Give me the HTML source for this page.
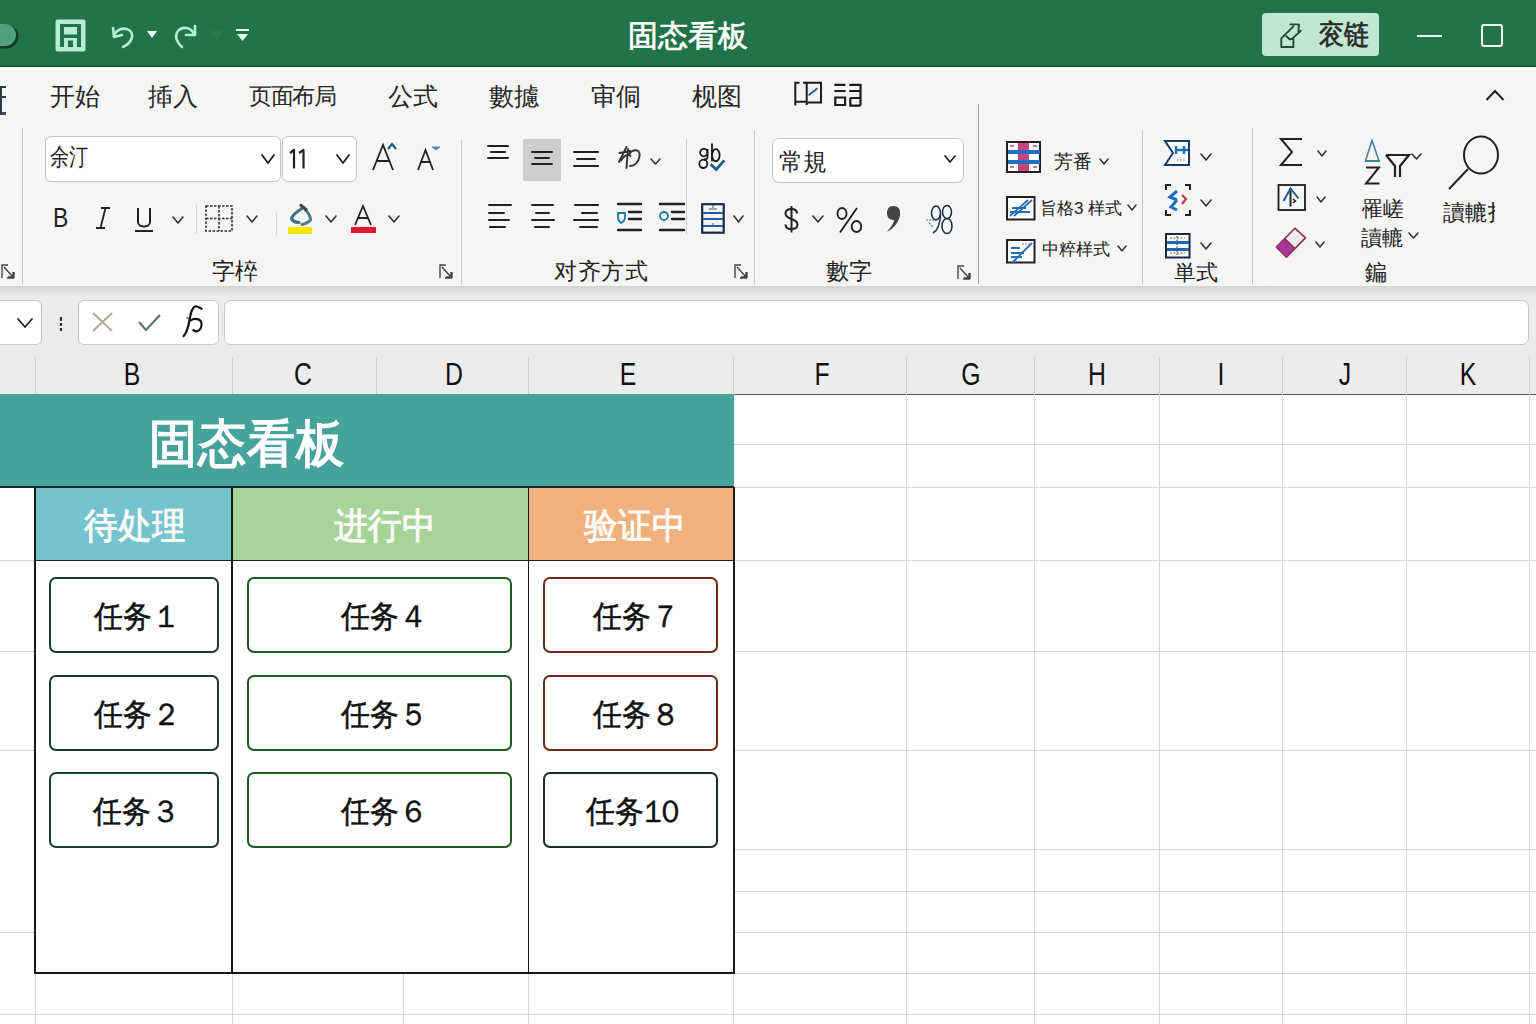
<!DOCTYPE html>
<html><head><meta charset="utf-8">
<style>
*{margin:0;padding:0;box-sizing:border-box}
html,body{width:1536px;height:1024px;overflow:hidden}
body{position:relative;background:#fff;font-family:"Liberation Sans",sans-serif;color:#222}
.a{position:absolute}
.t{position:absolute;white-space:nowrap;line-height:1}
svg{position:absolute;overflow:visible}
.vl{position:absolute;width:1px;background:#d6d6d6}
.hl{position:absolute;height:1px;background:#d6d6d6}
.sep{position:absolute;width:1px;background:#c9c9c9}
.chev{position:absolute}
.card{position:absolute;background:#fff;border:2px solid #1d3a36;border-radius:7px;font-size:32px;color:#111;text-align:center}
.ct{position:absolute;white-space:nowrap;line-height:1;font-size:31px;color:#111;-webkit-text-stroke:0.5px #111;transform:scaleX(.93);transform-origin:left}
.colh{position:absolute;font-size:27px;color:#111;top:361px;line-height:1;transform:scaleX(.82)}
</style></head><body>

<!-- ===== TITLE BAR ===== -->
<div class="a" style="left:0;top:0;width:1536px;height:67px;background:#227348"></div>
<div class="a" style="left:0;top:65.5px;width:1536px;height:1.5px;background:#0f4a28"></div>
<!-- autosave toggle -->
<div class="a" style="left:-30px;top:24px;width:46px;height:22px;border-radius:11px;background:#52a077;box-shadow:1.5px 1.5px 0 1px #143f27"></div>
<!-- save icon -->
<svg style="left:55px;top:19px" width="31" height="33" viewBox="0 0 31 33">
 <rect x="0.5" y="0.5" width="30" height="32" rx="2" fill="#b6efcf"/>
 <rect x="5" y="5" width="21" height="23" fill="#22734a"/>
 <rect x="9" y="8" width="13" height="7.5" fill="#b6efcf"/>
 <rect x="9" y="19" width="13" height="9" fill="#b6efcf"/>
 <rect x="13" y="21.5" width="5" height="6.5" fill="#22734a"/>
</svg>
<!-- undo -->
<svg style="left:111px;top:24px" width="26" height="25" viewBox="0 0 26 25">
 <path d="M3 12 C5 5 13 3 18 6 C24 10 21 19 12 23" fill="none" stroke="#b6efcf" stroke-width="2.6" stroke-linecap="round"/>
 <path d="M2 4 L3 13 L11 11" fill="none" stroke="#b6efcf" stroke-width="2.6" stroke-linecap="round" stroke-linejoin="round"/>
</svg>
<svg style="left:147px;top:31px" width="10" height="7"><path d="M0 0 L10 0 L5 7 Z" fill="#e8fff2"/></svg>
<!-- redo -->
<svg style="left:174px;top:24px" width="24" height="24" viewBox="0 0 24 24">
 <path d="M20 10 C17 3 8 2 4 7 C0 12 3 19 8 23" fill="none" stroke="#b6efcf" stroke-width="2.6" stroke-linecap="round"/>
 <path d="M21 2 L21 11 L12 11" fill="none" stroke="#b6efcf" stroke-width="2.6" stroke-linecap="round" stroke-linejoin="round"/>
</svg>
<svg style="left:210px;top:31px" width="13" height="9"><path d="M0 0 L13 0 L6.5 9 Z" fill="#2a7950"/></svg>
<svg style="left:236px;top:29px" width="13" height="13"><rect x="0" y="0" width="13" height="2" fill="#e8fff2"/><path d="M1 5 L12 5 L6.5 12 Z" fill="#e8fff2"/></svg>
<!-- title -->
<div class="t" style="left:628px;top:21px;font-size:30px;color:#fff;-webkit-text-stroke:0.7px #fff">固态看板</div>
<!-- share button -->
<div class="a" style="left:1262px;top:13px;width:117px;height:43px;border-radius:4px;background:#bfe9d0"></div>
<svg style="left:1279px;top:23px" width="24" height="26" viewBox="0 0 24 26">
 <path d="M2.3 15.4 L2.3 24 L14.4 24 L14.4 15.6 M2.3 15.4 L14.4 3.3 M11.3 1.4 L19.9 1.4 L19.4 8.4 M21.9 7.8 L13.2 15.6 M7.4 13.1 L10.6 16.2 L14.4 15.8" fill="none" stroke="#234a37" stroke-width="1.9" stroke-linejoin="round" stroke-linecap="round"/>
</svg>
<div class="t" style="left:1319px;top:20px;font-size:25px;color:#2a2a2a;-webkit-text-stroke:0.6px #2a2a2a;transform:scaleY(1.12);transform-origin:top">衮链</div>
<div class="a" style="left:1417px;top:35px;width:25px;height:2px;background:#e6f5ec"></div>
<div class="a" style="left:1481px;top:24px;width:22px;height:23px;border:2px solid #eafaf0;border-radius:3px"></div>

<!-- ===== RIBBON ===== -->
<div class="a" style="left:0;top:67px;width:1536px;height:220px;background:#f5f5f4"></div>
<div class="a" style="left:0;top:67px;width:1536px;height:2px;background:#fbfbfb"></div>
<div class="a" style="left:0;top:287px;width:1536px;height:65px;background:#ececec"></div>
<div class="a" style="left:0;top:286px;width:1536px;height:10px;background:linear-gradient(#d4d4d4,#ececec)"></div>


<!-- tabs -->
<div class="a" style="left:0;top:84px;width:7px;height:32px;overflow:hidden">
 <div class="a" style="left:-3px;top:1.5px;width:9px;height:2.5px;background:#2e3a48"></div>
 <div class="a" style="left:-3px;top:11.5px;width:9px;height:2.5px;background:#2e3a48"></div>
 <div class="a" style="left:-3px;top:27.5px;width:9px;height:3px;background:#3a4a5c"></div>
 <div class="a" style="left:0;top:1.5px;width:1.5px;height:29px;background:#2e3a48"></div>
</div>
<div class="t" style="left:50px;top:84px;font-size:25px;color:#262626">开始</div>
<div class="t" style="left:148px;top:84px;font-size:25px;color:#262626">揷入</div>
<div class="t" style="left:249px;top:85px;font-size:23px;color:#262626;letter-spacing:-1.5px">页面布局</div>
<div class="t" style="left:388px;top:84px;font-size:25px;color:#262626">公式</div>
<div class="t" style="left:489px;top:84px;font-size:25px;color:#262626">數攄</div>
<div class="t" style="left:591px;top:84px;font-size:25px;color:#262626">审侗</div>
<div class="t" style="left:692px;top:84px;font-size:25px;color:#262626">枧图</div>
<svg style="left:790px;top:80px" width="76" height="30" viewBox="0 0 76 30">
 <path d="M4.3 2.8 L9.5 2.8 M13 2.8 L31 2.8 L31 23.5 M5.3 2.8 L5.3 25.5 M16.7 2.8 L16.7 25 M5.6 21.7 L16.7 21.7 M16.7 22.5 L30.7 22.5" fill="none" stroke="#1c1c1c" stroke-width="2"/>
 <path d="M18.6 15.2 L27.4 8.3" stroke="#1f5fa8" stroke-width="2"/>
 <path d="M44.4 4.8 L55.4 4.8 M59.3 4.8 L70.5 4.8 L70.5 25.6 M44.4 11 L55.6 11 M59.3 11 L70 11 M45.3 17.5 L55.1 17.5 L55.1 25 L45.3 25 Z M60.3 18 L70.5 18 M60.3 18 L60.3 25.6 L70.5 25.6" fill="none" stroke="#1c1c1c" stroke-width="2.2"/>
</svg>
<svg style="left:1485px;top:89px" width="20" height="12" viewBox="0 0 20 12"><path d="M1.5 11 L10 2 L18.5 11" fill="none" stroke="#222" stroke-width="2"/></svg>


<!-- ===== FONT GROUP ===== -->
<div class="sep" style="left:22px;top:128px;height:156px"></div>
<svg style="left:1px;top:264px" width="14" height="15" viewBox="0 0 14 15"><path d="M1 14 L1 1 L7 1 M13 14 L13 8 M13 14 L6 14 M3 3 L12 13 M12 13 L12 8 M12 13 L7 13" fill="none" stroke="#444" stroke-width="1.4"/></svg>
<div class="a" style="left:45px;top:136px;width:236px;height:46px;background:#fff;border:1px solid #c2c2c2;border-radius:6px"></div>
<div class="t" style="left:50px;top:145px;font-size:24px;color:#222;transform:scaleX(.8);transform-origin:left">余汀</div>
<svg style="left:261px;top:154px" width="14" height="10" viewBox="0 0 14 10"><path d="M1 1 L7.0 9 L13 1" fill="none" stroke="#222" stroke-width="1.8" stroke-linecap="round" stroke-linejoin="round"/></svg>
<div class="a" style="left:282px;top:136px;width:75px;height:46px;background:#fff;border:1px solid #c2c2c2;border-radius:6px"></div>
<svg style="left:289px;top:149px" width="20" height="20" viewBox="0 0 20 20"><path d="M1 4 L5 1 L5 19.5 M10 4 L14.5 1 L14.5 19.5" fill="none" stroke="#222" stroke-width="2.2" stroke-linejoin="round"/></svg>
<svg style="left:336px;top:154px" width="14" height="10" viewBox="0 0 14 10"><path d="M1 1 L7.0 9 L13 1" fill="none" stroke="#222" stroke-width="1.8" stroke-linecap="round" stroke-linejoin="round"/></svg>
<svg style="left:372px;top:142px" width="26" height="30" viewBox="0 0 26 30">
 <path d="M1 28 L11 3 L21 28 M5 19 L17 19" fill="none" stroke="#222" stroke-width="1.8"/>
 <path d="M16 7 L20 2 L24 7" fill="none" stroke="#1e5d8a" stroke-width="2.2"/>
</svg>
<svg style="left:417px;top:145px" width="26" height="27" viewBox="0 0 26 27">
 <path d="M1 25 L8.5 5 L16 25 M4 17 L13 17" fill="none" stroke="#222" stroke-width="1.8"/>
 <path d="M15 2 L19 5 L23 2 Z" fill="#4f8fba" stroke="#4f8fba" stroke-width="1"/>
</svg>
<div class="sep" style="left:461px;top:140px;height:144px"></div>
<div class="t" style="left:53px;top:205px;font-size:27px;color:#222;transform:scaleX(.85);transform-origin:left">B</div>
<svg style="left:95px;top:207px" width="16" height="22" viewBox="0 0 16 22">
 <path d="M6 1 L15 1 M1 21 L10 21 M10.5 1 L5.5 21" fill="none" stroke="#222" stroke-width="1.8"/>
</svg>
<svg style="left:134px;top:207px" width="20" height="26" viewBox="0 0 20 26">
 <path d="M4 1 L4 15 C4 21 16 21 16 15 L16 1" fill="none" stroke="#222" stroke-width="2"/>
 <path d="M1 24 L19 24" stroke="#222" stroke-width="2"/>
</svg>
<svg style="left:172px;top:216px" width="12" height="8" viewBox="0 0 12 8"><path d="M1 1 L6.0 7 L11 1" fill="none" stroke="#333" stroke-width="1.6" stroke-linecap="round" stroke-linejoin="round"/></svg>
<div class="sep" style="left:196px;top:204px;height:30px;background:#d6d6d6"></div>
<svg style="left:205px;top:205px" width="28" height="27" viewBox="0 0 28 27">
 <path d="M1 1 L27 1 L27 26 L1 26 Z M14 1 L14 26 M1 13.5 L27 13.5" fill="none" stroke="#333" stroke-width="1.6" stroke-dasharray="2.5 1.5"/>
</svg>
<svg style="left:246px;top:215px" width="12" height="8" viewBox="0 0 12 8"><path d="M1 1 L6.0 7 L11 1" fill="none" stroke="#333" stroke-width="1.6" stroke-linecap="round" stroke-linejoin="round"/></svg>
<div class="sep" style="left:276px;top:212px;height:24px;background:#d6d6d6"></div>
<svg style="left:288px;top:203px" width="26" height="31" viewBox="0 0 26 31">
 <path d="M14 5.5 Q5 11 3.5 15.5 Q5 19 11 19.5" fill="none" stroke="#3f7083" stroke-width="3.2" stroke-linecap="round"/>
 <path d="M17.5 7 Q23 13 22.5 17 Q20 20 14 21.5" fill="none" stroke="#4a7d8e" stroke-width="3" stroke-linecap="round"/>
 <path d="M13 2.5 L18 6.5" stroke="#3d4a4e" stroke-width="3.2" stroke-linecap="round"/>
 <rect x="0" y="24" width="24" height="7" fill="#f7e600"/>
</svg>
<svg style="left:325px;top:215px" width="12" height="8" viewBox="0 0 12 8"><path d="M1 1 L6.0 7 L11 1" fill="none" stroke="#333" stroke-width="1.6" stroke-linecap="round" stroke-linejoin="round"/></svg>
<svg style="left:351px;top:204px" width="26" height="30" viewBox="0 0 26 30">
 <path d="M4 21 L12 2 L20 21 M7 14 L17 14" fill="none" stroke="#222" stroke-width="1.8"/>
 <rect x="0" y="23" width="25" height="6" fill="#dd1a2b"/>
</svg>
<svg style="left:388px;top:215px" width="12" height="8" viewBox="0 0 12 8"><path d="M1 1 L6.0 7 L11 1" fill="none" stroke="#333" stroke-width="1.6" stroke-linecap="round" stroke-linejoin="round"/></svg>
<div class="t" style="left:212px;top:260px;font-size:23px;color:#222">字椊</div>
<svg style="left:439px;top:264px" width="14" height="15" viewBox="0 0 14 15"><path d="M1 14 L1 1 L7 1 M13 14 L13 8 M13 14 L6 14 M3 3 L12 13 M12 13 L12 8 M12 13 L7 13" fill="none" stroke="#444" stroke-width="1.4"/></svg>


<!-- ===== ALIGN GROUP ===== -->
<svg style="left:486px;top:144px" width="50" height="40"><path d="M2 2 L22 2 M5 8 L19 8 M2 14 L22 14" stroke="#222" stroke-width="2" stroke-linecap="round"/></svg>
<div class="a" style="left:523px;top:139px;width:38px;height:42px;background:#cdcdcd"></div>
<svg style="left:530px;top:150px" width="50" height="40"><path d="M2 2 L22 2 M5 8 L19 8 M2 14 L22 14" stroke="#222" stroke-width="2" stroke-linecap="round"/></svg>
<svg style="left:572px;top:150px" width="50" height="40"><path d="M2 2 L26 2 M5 9 L23 9 M2 16 L26 16" stroke="#222" stroke-width="2" stroke-linecap="round"/></svg>
<svg style="left:616px;top:145px" width="26" height="26" viewBox="0 0 26 26">
 <path d="M10.5 2 L3 17 M3.5 8 L14 6 M5 15.5 C8 10 13 8.5 14.5 11 M12 4 L10.5 23 M12.5 10 C17 3 25 4 23.5 11.5 C22 18 18 21 14 21" fill="none" stroke="#333" stroke-width="1.9" stroke-linecap="round"/>
</svg>
<svg style="left:650px;top:158px" width="11" height="7" viewBox="0 0 11 7"><path d="M1 1 L5.5 6 L10 1" fill="none" stroke="#333" stroke-width="1.5" stroke-linecap="round" stroke-linejoin="round"/></svg>
<div class="sep" style="left:686px;top:139px;height:95px;background:#cdcdcd"></div>
<svg style="left:698px;top:142px" width="30" height="30" viewBox="0 0 30 30">
 <circle cx="5.8" cy="10.6" r="3.7" fill="none" stroke="#1a1a1a" stroke-width="1.8"/>
 <path d="M9.5 7 L9.5 15 C9.5 17 8 17.5 6 17.5" fill="none" stroke="#1a1a1a" stroke-width="1.8"/>
 <ellipse cx="5.3" cy="21.8" rx="4" ry="4.2" fill="none" stroke="#1a1a1a" stroke-width="1.8"/>
 <path d="M14 1.5 L14 19.3" stroke="#1a1a1a" stroke-width="1.8"/>
 <ellipse cx="17.8" cy="13.2" rx="3.8" ry="6" fill="none" stroke="#1a1a1a" stroke-width="1.8"/>
 <path d="M12.7 22.2 L18.2 27.5 L26.3 18.4" fill="none" stroke="#1d5f8a" stroke-width="2.8"/>
</svg>
<svg style="left:487px;top:203px" width="50" height="40"><path d="M2 2 L24 2 M2 10 L17 10 M2 17 L22 17 M3 24 L18 24" stroke="#222" stroke-width="2" stroke-linecap="round"/></svg>
<svg style="left:530px;top:203px" width="50" height="40"><path d="M2 2 L23 2 M6 10 L19 10 M2 17 L24 17 M5 24 L19 24" stroke="#222" stroke-width="2" stroke-linecap="round"/></svg>
<svg style="left:572px;top:203px" width="50" height="40"><path d="M3 2 L26 2 M10 10 L25 10 M2 17 L26 17 M8 24 L25 24" stroke="#222" stroke-width="2" stroke-linecap="round"/></svg>
<svg style="left:616px;top:202px" width="28" height="32" viewBox="0 0 28 32">
 <path d="M2 2 L25 2 M13 10 L25 10 M13 17 L25 17 M2 28 L25 28" stroke="#222" stroke-width="2.4" stroke-linecap="round"/>
 <path d="M2 11 L9 11 L9 15 C9 19 5 21 5 21 C5 21 2 19 2 15 Z" fill="none" stroke="#1f78a8" stroke-width="1.8"/>
</svg>
<svg style="left:658px;top:202px" width="28" height="32" viewBox="0 0 28 32">
 <path d="M2 2 L26 2 M14 10 L26 10 M14 17 L26 17 M2 28 L26 28" stroke="#222" stroke-width="2.4" stroke-linecap="round"/>
 <circle cx="6" cy="14" r="4" fill="none" stroke="#1f78a8" stroke-width="1.8"/>
</svg>
<svg style="left:701px;top:203px" width="25" height="32" viewBox="0 0 25 32">
 <rect x="1.2" y="1.2" width="21.5" height="28.5" fill="none" stroke="#1b2a44" stroke-width="2.2"/>
 <path d="M2 10 L22 10 M2 16 L22 16 M2 23 L22 23" stroke="#1e5fa3" stroke-width="1.8"/>
 <path d="M8 6 L16 6 M12 2 L12 5 M12 20 L12 23" stroke="#555" stroke-width="1"/>
</svg>
<svg style="left:733px;top:215px" width="11" height="8" viewBox="0 0 11 8"><path d="M1 1 L5.5 7 L10 1" fill="none" stroke="#333" stroke-width="1.6" stroke-linecap="round" stroke-linejoin="round"/></svg>
<div class="t" style="left:554px;top:260px;font-size:23px;color:#222;letter-spacing:0.5px">对齐方式</div>
<svg style="left:734px;top:264px" width="14" height="15" viewBox="0 0 14 15"><path d="M1 14 L1 1 L7 1 M13 14 L13 8 M13 14 L6 14 M3 3 L12 13 M12 13 L12 8 M12 13 L7 13" fill="none" stroke="#444" stroke-width="1.4"/></svg>
<div class="sep" style="left:754px;top:130px;height:154px"></div>

<!-- ===== NUMBER GROUP ===== -->
<div class="a" style="left:772px;top:138px;width:192px;height:45px;background:#fff;border:1px solid #c4c4c4;border-radius:7px"></div>
<div class="t" style="left:779px;top:150px;font-size:24px;color:#222">常規</div>
<svg style="left:944px;top:155px" width="12" height="8" viewBox="0 0 12 8"><path d="M1 1 L6.0 7 L11 1" fill="none" stroke="#222" stroke-width="1.7" stroke-linecap="round" stroke-linejoin="round"/></svg>
<svg style="left:784px;top:205px" width="15" height="28" viewBox="0 0 15 28">
 <path d="M13 8.5 C13 5 10.5 4 7.5 4 C4 4 1.5 5.5 1.5 8.5 C1.5 12 5 13 7.5 14 C10.5 15 13.5 16 13.5 19.5 C13.5 23 10.5 24 7.5 24 C4 24 1.5 23 1.5 19.5" fill="none" stroke="#222" stroke-width="2"/>
 <path d="M7.5 1 L7.5 27.5" stroke="#222" stroke-width="2"/>
</svg>
<svg style="left:812px;top:215px" width="12" height="8" viewBox="0 0 12 8"><path d="M1 1 L6.0 7 L11 1" fill="none" stroke="#333" stroke-width="1.6" stroke-linecap="round" stroke-linejoin="round"/></svg>
<svg style="left:836px;top:207px" width="27" height="26" viewBox="0 0 27 26">
 <ellipse cx="6" cy="6.5" rx="4.5" ry="5.5" fill="none" stroke="#222" stroke-width="1.9"/>
 <ellipse cx="20.5" cy="19.5" rx="4.8" ry="5.5" fill="none" stroke="#222" stroke-width="1.9"/>
 <path d="M21 1 L4 25.5" stroke="#222" stroke-width="1.9"/>
</svg>
<svg style="left:885px;top:205px" width="17" height="28" viewBox="0 0 17 28"><path d="M8 1 C13 1 16 4 15 10 C14 17 9 23 2 27 C6 22 9 18 9 15 C4 15 2 12 2 8 C2 4 4 1 8 1 Z" fill="#444"/></svg>
<svg style="left:925px;top:204px" width="28" height="31" viewBox="0 0 28 31">
 <ellipse cx="11" cy="9" rx="4.5" ry="7" fill="none" stroke="#1b2a44" stroke-width="1.5"/>
 <path d="M15.5 10 C15 20 12 27 8 29" fill="none" stroke="#1b2a44" stroke-width="1.5"/>
 <ellipse cx="22" cy="8" rx="4.5" ry="6.5" fill="none" stroke="#1b2a44" stroke-width="1.5"/>
 <ellipse cx="22" cy="22" rx="5" ry="7.5" fill="none" stroke="#1b2a44" stroke-width="1.5"/>
 <path d="M1 16 L9 16 M4 19 L8 23" stroke="#3a6e8e" stroke-width="1.2" stroke-dasharray="2 1"/>
</svg>
<div class="t" style="left:826px;top:260px;font-size:23px;color:#222">數字</div>
<svg style="left:957px;top:265px" width="14" height="15" viewBox="0 0 14 15"><path d="M1 14 L1 1 L7 1 M13 14 L13 8 M13 14 L6 14 M3 3 L12 13 M12 13 L12 8 M12 13 L7 13" fill="none" stroke="#444" stroke-width="1.4"/></svg>
<div class="sep" style="left:978px;top:104px;height:180px;background:#a8a8a8"></div>


<!-- ===== STYLES GROUP ===== -->
<svg style="left:1006px;top:141px" width="36" height="33" viewBox="0 0 36 33">
 <rect x="1" y="1" width="33" height="30" fill="#fff" stroke="#222" stroke-width="2"/>
 <rect x="12" y="2" width="11" height="28" fill="#c8447c"/>
 <path d="M2 11 L34 11 M2 21 L34 21" stroke="#1f6fc0" stroke-width="4"/>
 <path d="M4 5 L8 5 M27 5 L31 5 M4 26 L8 26 M27 26 L31 26" stroke="#d04050" stroke-width="1.5"/>
</svg>
<div class="t" style="left:1054px;top:152px;font-size:19px;color:#222">芳番</div>
<svg style="left:1099px;top:158px" width="10" height="7" viewBox="0 0 10 7"><path d="M1 1 L5.0 6 L9 1" fill="none" stroke="#333" stroke-width="1.5" stroke-linecap="round" stroke-linejoin="round"/></svg>
<svg style="left:1006px;top:196px" width="30" height="25" viewBox="0 0 30 25">
 <rect x="1" y="1" width="27.5" height="22.5" fill="#fff" stroke="#222" stroke-width="2"/>
 <path d="M4 20 L22 4 M8 20 L26 4 M6 12 L20 12 M4 16 L24 16" stroke="#1f6fc0" stroke-width="1.8"/>
</svg>
<div class="t" style="left:1040px;top:200px;font-size:17px;color:#222">旨格3 样式</div>
<svg style="left:1127px;top:204px" width="10" height="7" viewBox="0 0 10 7"><path d="M1 1 L5.0 6 L9 1" fill="none" stroke="#333" stroke-width="1.5" stroke-linecap="round" stroke-linejoin="round"/></svg>
<svg style="left:1006px;top:239px" width="30" height="25" viewBox="0 0 30 25">
 <rect x="1" y="1" width="27.5" height="22.5" fill="#fff" stroke="#222" stroke-width="2"/>
 <path d="M6 24 L26 4 M5 9 L14 9 M5 14 L18 14 M5 18 L16 18" stroke="#1f6fc0" stroke-width="1.8"/>
 <path d="M16 5 L26 5" stroke="#888" stroke-width="1" stroke-dasharray="2 1"/>
</svg>
<div class="t" style="left:1042px;top:241px;font-size:17px;color:#222">中粹样式</div>
<svg style="left:1117px;top:245px" width="10" height="7" viewBox="0 0 10 7"><path d="M1 1 L5.0 6 L9 1" fill="none" stroke="#333" stroke-width="1.5" stroke-linecap="round" stroke-linejoin="round"/></svg>
<div class="sep" style="left:1142px;top:130px;height:154px"></div>

<!-- ===== CELLS GROUP ===== -->
<svg style="left:1164px;top:140px" width="27" height="27" viewBox="0 0 27 27">
 <path d="M1 1 L25 1 L25 25 L1 25 L9 13 Z" fill="#fff" stroke="#1b3a66" stroke-width="2"/>
 <path d="M12 6 L12 14 M20 6 L20 14 M12 10 L24 10" stroke="#1f6fc0" stroke-width="2.5"/>
 <path d="M13 20 L22 20" stroke="#888" stroke-width="1" stroke-dasharray="2 1"/>
</svg>
<svg style="left:1200px;top:153px" width="12" height="8" viewBox="0 0 12 8"><path d="M1 1 L6.0 7 L11 1" fill="none" stroke="#333" stroke-width="1.6" stroke-linecap="round" stroke-linejoin="round"/></svg>
<svg style="left:1165px;top:184px" width="27" height="32" viewBox="0 0 27 32">
 <path d="M1 6 L1 1 L6 1 M20 1 L25 1 L25 6 M1 26 L1 31 L6 31 M20 31 L25 31 L25 26" fill="none" stroke="#222" stroke-width="2"/>
 <path d="M12 7 L5 13 L12 16 M12 16 L6 23 L12 26" fill="none" stroke="#1f6fc0" stroke-width="3"/>
 <path d="M17 11 L21 15 L17 20" fill="none" stroke="#c8335a" stroke-width="2.2"/>
</svg>
<svg style="left:1200px;top:199px" width="12" height="8" viewBox="0 0 12 8"><path d="M1 1 L6.0 7 L11 1" fill="none" stroke="#333" stroke-width="1.6" stroke-linecap="round" stroke-linejoin="round"/></svg>
<svg style="left:1165px;top:233px" width="26" height="26" viewBox="0 0 26 26">
 <rect x="1" y="1" width="23.5" height="23.5" fill="#fff" stroke="#1b2a44" stroke-width="2"/>
 <path d="M2 9.5 L24 9.5 M2 16.5 L24 16.5" stroke="#1f66b8" stroke-width="3"/>
 <path d="M12 3 L12 22 M5 5 L20 5 M5 20 L20 20" stroke="#555" stroke-width="1.2" stroke-dasharray="2 1.5"/>
</svg>
<svg style="left:1200px;top:242px" width="12" height="8" viewBox="0 0 12 8"><path d="M1 1 L6.0 7 L11 1" fill="none" stroke="#333" stroke-width="1.6" stroke-linecap="round" stroke-linejoin="round"/></svg>
<div class="t" style="left:1174px;top:262px;font-size:22px;color:#222">単式</div>
<div class="sep" style="left:1252px;top:128px;height:156px"></div>

<!-- ===== EDITING GROUP ===== -->
<svg style="left:1279px;top:137px" width="25" height="30" viewBox="0 0 25 30">
 <path d="M23 2 L2 2 L13 15 L2 28 L23 28" fill="none" stroke="#222" stroke-width="2"/>
</svg>
<svg style="left:1317px;top:150px" width="10" height="7" viewBox="0 0 10 7"><path d="M1 1 L5.0 6 L9 1" fill="none" stroke="#333" stroke-width="1.6" stroke-linecap="round" stroke-linejoin="round"/></svg>
<svg style="left:1277px;top:184px" width="30" height="28" viewBox="0 0 30 28">
 <rect x="1.5" y="1" width="26.5" height="25" fill="#f7f7f8" stroke="#1a1a1a" stroke-width="1.8"/>
 <path d="M13.5 4 L13.5 22.5" stroke="#1d2a33" stroke-width="2"/>
 <path d="M6.5 17 L13.5 4.5 L21.5 14.5" fill="none" stroke="#1d5f98" stroke-width="2"/>
 <path d="M16 15 L18.5 17 L16 19" fill="none" stroke="#222" stroke-width="1.5"/>
</svg>
<svg style="left:1316px;top:196px" width="10" height="7" viewBox="0 0 10 7"><path d="M1 1 L5.0 6 L9 1" fill="none" stroke="#333" stroke-width="1.6" stroke-linecap="round" stroke-linejoin="round"/></svg>
<svg style="left:1275px;top:227px" width="32" height="32" viewBox="0 0 32 32">
 <path d="M1.4 20.1 L19.9 1.2 L30.5 10.9 L11.5 30.2 Z" fill="#ebebed"/>
 <path d="M1.4 20.1 L9.7 11.6 L20 21.5 L11.5 30.2 Z" fill="#a5389a"/>
 <path d="M1.4 20.1 L19.9 1.2 L30.5 10.9 L11.5 30.2 Z M9.7 11.6 L20 21.5" fill="none" stroke="#9a2a5e" stroke-width="1.6" stroke-linejoin="round"/>
</svg>
<svg style="left:1315px;top:241px" width="10" height="7" viewBox="0 0 10 7"><path d="M1 1 L5.0 6 L9 1" fill="none" stroke="#333" stroke-width="1.6" stroke-linecap="round" stroke-linejoin="round"/></svg>
<svg style="left:1364px;top:139px" width="17" height="24" viewBox="0 0 17 24"><path d="M1.5 22 L8 1.5 L15 22 Z" fill="none" stroke="#3d7f9c" stroke-width="1.5"/><path d="M1 22 L16 22" stroke="#3d7f9c" stroke-width="1.8"/></svg>
<svg style="left:1364px;top:166px" width="17" height="19" viewBox="0 0 17 19"><path d="M2 1.5 L15 1.5 L2 17.5 L15.5 17.5" fill="none" stroke="#222" stroke-width="2"/></svg>
<svg style="left:1385px;top:153px" width="26" height="26" viewBox="0 0 26 26">
 <path d="M1 2 L24 2 L15 13 L15 24 M1 2 L10 13 L10 24" fill="none" stroke="#222" stroke-width="2.2"/>
</svg>
<svg style="left:1411px;top:153px" width="11" height="7" viewBox="0 0 11 7"><path d="M1 1 L5.5 6 L10 1" fill="none" stroke="#333" stroke-width="1.6" stroke-linecap="round" stroke-linejoin="round"/></svg>
<div class="t" style="left:1362px;top:198px;font-size:21px;color:#222">罹嵯</div>
<div class="t" style="left:1361px;top:227px;font-size:21px;color:#222">讀轆</div>
<svg style="left:1408px;top:232px" width="11" height="7" viewBox="0 0 11 7"><path d="M1 1 L5.5 6 L10 1" fill="none" stroke="#333" stroke-width="1.6" stroke-linecap="round" stroke-linejoin="round"/></svg>
<div class="t" style="left:1365px;top:262px;font-size:22px;color:#222">鍽</div>
<svg style="left:1446px;top:135px" width="56" height="58" viewBox="0 0 56 58">
 <ellipse cx="35" cy="20" rx="17" ry="18.5" fill="none" stroke="#222" stroke-width="2"/>
 <path d="M22 34 L3 54" stroke="#222" stroke-width="2"/>
</svg>
<div class="t" style="left:1443px;top:202px;font-size:22px;color:#222;width:52px;overflow:hidden">讀轆扌</div>


<!-- ===== FORMULA BAR ===== -->
<div class="a" style="left:-10px;top:300px;width:52px;height:45px;background:#fff;border:1px solid #c8c8c8;border-radius:6px"></div>
<svg style="left:17px;top:318px" width="16" height="10" viewBox="0 0 16 10"><path d="M1 1 L8.0 9 L15 1" fill="none" stroke="#222" stroke-width="1.8" stroke-linecap="round" stroke-linejoin="round"/></svg>
<svg style="left:59px;top:316px" width="4" height="16"><path d="M2 1 L2 5 M2 7 L2 10 M2 12 L2 15" stroke="#333" stroke-width="2.2"/></svg>
<div class="a" style="left:78px;top:300px;width:141px;height:45px;background:#fff;border:1px solid #c8c8c8;border-radius:6px"></div>
<svg style="left:91px;top:311px" width="23" height="22" viewBox="0 0 23 22"><path d="M2 2 L21 20 M21 2 L2 20" stroke="#b3aa9e" stroke-width="2"/></svg>
<svg style="left:137px;top:313px" width="25" height="19" viewBox="0 0 25 19"><path d="M2 9 L9 17 L23 2" fill="none" stroke="#5b6e72" stroke-width="2"/></svg>
<svg style="left:180px;top:303px" width="25" height="36" viewBox="0 0 25 36">
 <path d="M3.6 33.2 C6 30 8 26 9.3 17.8 C10.5 10 12 4 15.5 3.3 C17 3 19 4.5 21.6 5.8" fill="none" stroke="#111" stroke-width="2.2" stroke-linecap="round"/>
 <path d="M6.3 14.5 L11.1 16.5" stroke="#333" stroke-width="1.2"/>
 <path d="M10.6 17.5 C14 15 21.5 15 21.6 21.4 C21.5 26 18.5 28.5 16.4 28.4 C15 28.3 14 27.8 13.3 27" fill="none" stroke="#111" stroke-width="2.1" stroke-linecap="round"/>
</svg>
<div class="a" style="left:224px;top:300px;width:1305px;height:45px;background:#fff;border:1px solid #c8c8c8;border-radius:7px"></div>

<!-- ===== COLUMN HEADERS ===== -->
<div class="a" style="left:0;top:352px;width:1536px;height:42px;background:#ececec"></div>
<div class="a" style="left:35px;top:357px;width:1px;height:37px;background:#cfcfcf"></div>
<div class="a" style="left:232px;top:357px;width:1px;height:37px;background:#cfcfcf"></div>
<div class="a" style="left:376px;top:357px;width:1px;height:37px;background:#cfcfcf"></div>
<div class="a" style="left:528px;top:357px;width:1px;height:37px;background:#cfcfcf"></div>
<div class="a" style="left:733px;top:357px;width:1px;height:37px;background:#cfcfcf"></div>
<div class="a" style="left:906px;top:357px;width:1px;height:37px;background:#cfcfcf"></div>
<div class="a" style="left:1034px;top:357px;width:1px;height:37px;background:#cfcfcf"></div>
<div class="a" style="left:1159px;top:357px;width:1px;height:37px;background:#cfcfcf"></div>
<div class="a" style="left:1282px;top:357px;width:1px;height:37px;background:#cfcfcf"></div>
<div class="a" style="left:1406px;top:357px;width:1px;height:37px;background:#cfcfcf"></div>
<div class="a" style="left:1529px;top:357px;width:1px;height:37px;background:#cfcfcf"></div>
<div class="t" style="left:102px;width:60px;top:358.5px;font-size:31px;color:#111;text-align:center;transform:scaleX(.8)">B</div>
<div class="t" style="left:273px;width:60px;top:358.5px;font-size:31px;color:#111;text-align:center;transform:scaleX(.8)">C</div>
<div class="t" style="left:423.5px;width:60px;top:358.5px;font-size:31px;color:#111;text-align:center;transform:scaleX(.8)">D</div>
<div class="t" style="left:597.5px;width:60px;top:358.5px;font-size:31px;color:#111;text-align:center;transform:scaleX(.8)">E</div>
<div class="t" style="left:791.7px;width:60px;top:358.5px;font-size:31px;color:#111;text-align:center;transform:scaleX(.8)">F</div>
<div class="t" style="left:940.5px;width:60px;top:358.5px;font-size:31px;color:#111;text-align:center;transform:scaleX(.8)">G</div>
<div class="t" style="left:1067px;width:60px;top:358.5px;font-size:31px;color:#111;text-align:center;transform:scaleX(.8)">H</div>
<div class="t" style="left:1190.8px;width:60px;top:358.5px;font-size:31px;color:#111;text-align:center;transform:scaleX(.8)">I</div>
<div class="t" style="left:1314.5px;width:60px;top:358.5px;font-size:31px;color:#111;text-align:center;transform:scaleX(.8)">J</div>
<div class="t" style="left:1438px;width:60px;top:358.5px;font-size:31px;color:#111;text-align:center;transform:scaleX(.8)">K</div>
<div class="a" style="left:0;top:393.5px;width:1536px;height:1px;background:#555"></div>

<!-- ===== GRID ===== -->
<div class="hl" style="left:733px;top:444px;width:803px"></div>
<div class="hl" style="left:733px;top:487px;width:803px"></div>
<div class="hl" style="left:733px;top:560px;width:803px"></div>
<div class="hl" style="left:733px;top:651px;width:803px"></div>
<div class="hl" style="left:733px;top:750px;width:803px"></div>
<div class="hl" style="left:733px;top:849px;width:803px"></div>
<div class="hl" style="left:733px;top:891px;width:803px"></div>
<div class="hl" style="left:733px;top:932px;width:803px"></div>
<div class="hl" style="left:733px;top:973px;width:803px"></div>
<div class="hl" style="left:733px;top:1014px;width:803px"></div>
<div class="vl" style="left:906px;top:394px;height:630px"></div>
<div class="vl" style="left:1034px;top:394px;height:630px"></div>
<div class="vl" style="left:1159px;top:394px;height:630px"></div>
<div class="vl" style="left:1282px;top:394px;height:630px"></div>
<div class="vl" style="left:1406px;top:394px;height:630px"></div>
<div class="vl" style="left:1529px;top:394px;height:630px"></div>
<div class="hl" style="left:0;top:560px;width:35px"></div>
<div class="hl" style="left:0;top:651px;width:35px"></div>
<div class="hl" style="left:0;top:750px;width:35px"></div>
<div class="hl" style="left:0;top:932px;width:35px"></div>
<div class="hl" style="left:0;top:1014px;width:35px"></div>
<div class="hl" style="left:35px;top:1014px;width:698px"></div>
<div class="vl" style="left:35px;top:973px;height:51px"></div>
<div class="vl" style="left:232px;top:973px;height:51px"></div>
<div class="vl" style="left:403px;top:973px;height:51px"></div>
<div class="vl" style="left:528px;top:973px;height:51px"></div>
<div class="vl" style="left:733px;top:973px;height:51px"></div>

<!-- ===== KANBAN ===== -->
<div class="a" style="left:0;top:394px;width:734px;height:93px;background:#45a39b"></div>
<div class="t" style="left:149px;top:418px;font-size:48.5px;font-weight:bold;color:#fff;transform:scaleY(1.06);transform-origin:top">固态看板</div>
<div class="a" style="left:0;top:486px;width:734px;height:2px;background:#1a2a2a"></div>
<div class="a" style="left:35px;top:488px;width:197px;height:73px;background:#74c4cf"></div>
<div class="a" style="left:233px;top:488px;width:296px;height:73px;background:#a6d398"></div>
<div class="a" style="left:529px;top:488px;width:204px;height:73px;background:#f0b17e"></div>
<div class="t" style="left:84px;top:507px;font-size:35px;color:#fbfbf7;-webkit-text-stroke:0.9px #fbfbf7;transform:scale(.97,1.04);transform-origin:left top">待处理</div>
<div class="t" style="left:334px;top:507px;font-size:35px;color:#fbfbf7;-webkit-text-stroke:0.9px #fbfbf7;transform:scale(.97,1.04);transform-origin:left top">进行中</div>
<div class="t" style="left:584px;top:507px;font-size:35px;color:#fbfbf7;-webkit-text-stroke:0.9px #fbfbf7;transform:scale(.97,1.04);transform-origin:left top">验证中</div>
<div class="a" style="left:35px;top:560px;width:698px;height:1px;background:#222"></div>
<div class="a" style="left:34px;top:487px;width:2px;height:487px;background:#1a1a1a"></div>
<div class="a" style="left:231px;top:487px;width:2px;height:487px;background:#1a1a1a"></div>
<div class="a" style="left:528px;top:487px;width:1px;height:487px;background:#1a1a1a"></div>
<div class="a" style="left:733px;top:487px;width:1.5px;height:487px;background:#1a1a1a"></div>
<div class="a" style="left:34px;top:972px;width:700px;height:2px;background:#1a1a1a"></div>
<div class="card" style="left:49px;top:577px;width:170px;height:76px;border-color:#1d3a36"></div>
<div class="card" style="left:49px;top:675px;width:170px;height:76px;border-color:#1d3a36"></div>
<div class="card" style="left:49px;top:772px;width:170px;height:76px;border-color:#1d3a36"></div>
<div class="card" style="left:247px;top:577px;width:265px;height:76px;border-color:#1f5a23"></div>
<div class="card" style="left:247px;top:675px;width:265px;height:76px;border-color:#1f5a23"></div>
<div class="card" style="left:247px;top:772px;width:265px;height:76px;border-color:#1f5a23"></div>
<div class="card" style="left:543px;top:577px;width:175px;height:76px;border-color:#6b2a1c"></div>
<div class="card" style="left:543px;top:675px;width:175px;height:76px;border-color:#6b2a1c"></div>
<div class="card" style="left:543px;top:772px;width:175px;height:76px;border-color:#1d2a2a"></div>
<div class="ct" style="left:93.6px;top:601px">任务１</div>
<div class="ct" style="left:93.6px;top:699px">任务２</div>
<div class="ct" style="left:93px;top:796px">任务３</div>
<div class="ct" style="left:340.6px;top:601px">任务４</div>
<div class="ct" style="left:340.6px;top:699px">任务５</div>
<div class="ct" style="left:340.6px;top:796px">任务６</div>
<div class="ct" style="left:592.6px;top:601px">任务７</div>
<div class="ct" style="left:592.6px;top:699px">任务８</div>
<div class="ct" style="left:585.8px;top:796px">任务<span style="margin-left:-5px;letter-spacing:-13px">１</span>０</div>

</body></html>
